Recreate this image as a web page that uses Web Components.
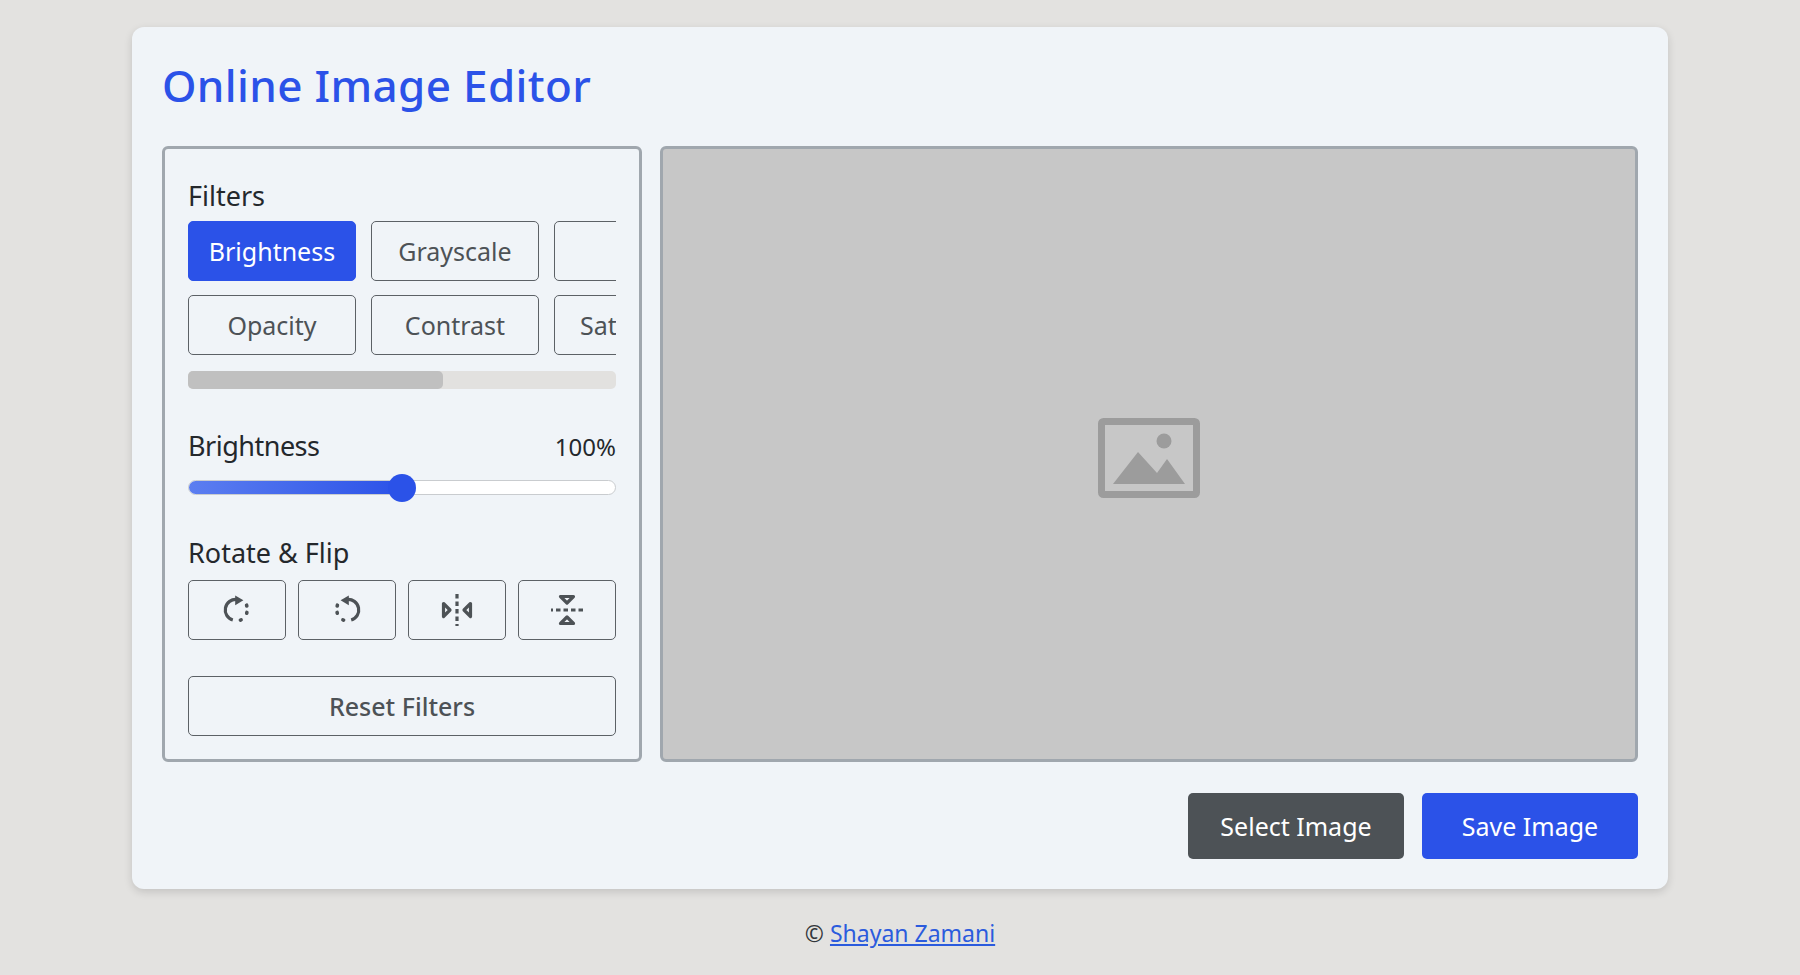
<!DOCTYPE html>
<html lang="en">
<head>
<meta charset="utf-8">
<title>Online Image Editor</title>
<style>
  html, body { margin: 0; height: 100%; }
  body { background: #e3e2e0; font-family: "Noto Sans", "Open Sans", sans-serif; }
</style>
</head>
<body>
<editor-page>
  <editor-card>
    <filter-panel></filter-panel>
    <preview-box></preview-box>
  </editor-card>
</editor-page>

<script>
const FONT = `"Noto Sans", "Open Sans", sans-serif`;

class EditorPage extends HTMLElement {
  constructor() {
    super();
    this.attachShadow({ mode: 'open' });
    this.shadowRoot.innerHTML = `
      <style>
        :host { display: flex; flex-direction: column; align-items: center; padding-top: 27px; font-family: ${FONT}; }
        footer { margin-top: 28px; font-size: 23px; color: #33373b; line-height: 32px; }
        a { color: #2b5bdd; }
      </style>
      <slot></slot>
      <footer>&copy; <a href="#">Shayan Zamani</a></footer>
    `;
  }
}
customElements.define('editor-page', EditorPage);

class EditorCard extends HTMLElement {
  constructor() {
    super();
    this.attachShadow({ mode: 'open' });
    this.shadowRoot.innerHTML = `
      <style>
        :host { display: block; width: 1536px; box-sizing: border-box; padding: 30px; background: #f0f4f8; border-radius: 12px; box-shadow: 0 3px 8px rgba(0,0,0,0.14); }
        h1 { margin: 0 0 33px; color: #2b52e8; font-size: 44px; line-height: 56px; font-weight: 500; letter-spacing: 0.35px; }
        #work { display: flex; gap: 18px; height: 616px; }
        #actions { display: flex; justify-content: flex-end; gap: 18px; margin-top: 31px; }
        button { width: 216px; height: 66px; border: 0; border-radius: 5px; color: #fff; font: 400 25px ${FONT}; background: #4d5256; }
        button.save { background: #2b52e8; }
      </style>
      <h1>Online Image Editor</h1>
      <div id="work"><slot></slot></div>
      <div id="actions">
        <button>Select Image</button>
        <button class="save">Save Image</button>
      </div>
    `;
  }
}
customElements.define('editor-card', EditorCard);

class FilterPanel extends HTMLElement {
  constructor() {
    super();
    this.attachShadow({ mode: 'open' });
    this.shadowRoot.innerHTML = `
      <style>
        :host { display: block; flex: 0 0 480px; min-width: 0; box-sizing: border-box; padding: 29px 23px 28px 23px; border: 3px solid #a0a7ae; border-radius: 6px; color: #24282c; }
        * { box-sizing: border-box; }
        .label { font-size: 27px; line-height: 36px; }
        #scroll { overflow: hidden; margin-top: 7px; }
        #grid { display: grid; grid-template-columns: repeat(4, 168px); gap: 14px 15px; width: 717px; }
        /* native scrollbars don't show up in the headless shot, so draw one */
        #bar { height: 18px; margin-top: 16px; background: #e2e1df; border-radius: 5px; }
        #bar div { width: 59.5%; height: 100%; background: #c0c0c0; border-radius: 5px; }
        button { height: 60px; padding: 0; background: transparent; border: 1px solid #5c6166; border-radius: 5px; color: #4d5256; font: 400 25px ${FONT}; }
        button.on { background: #2b52e8; border-color: #2b52e8; color: #fff; }
        button.nudge { padding-left: 6px; }
        #head { display: flex; justify-content: space-between; align-items: center; margin-top: 39px; }
        #head .label { letter-spacing: -0.5px; }
        #value { font-size: 24px; }
        #track { position: relative; height: 15px; margin-top: 16px; background: #fff; border: 1px solid #c9cccf; border-radius: 8px; }
        #fill { width: 50%; height: 100%; border-radius: 8px 0 0 8px; background: linear-gradient(90deg, #5c7ef0, #2b52e8); }
        #thumb { position: absolute; left: 50%; top: 50%; width: 28px; height: 28px; margin: -14px 0 0 -14px; border-radius: 50%; background: #2b52e8; }
        #rotate-label { margin-top: 40px; }
        #icons { display: flex; gap: 12px; margin-top: 9px; }
        #icons button { flex: 1; display: flex; align-items: center; justify-content: center; }
        svg { width: 34px; height: 34px; fill: none; stroke: #4d5256; stroke-width: 3.2; }
        .dots { stroke-width: 3.6; stroke-linecap: round; }
        .mirror { transform: scaleX(-1); }
        .turn { transform: rotate(90deg); }
        #reset { width: 100%; margin-top: 36px; font-weight: 500; }
      </style>
      <div class="label">Filters</div>
      <div id="scroll"><div id="grid">
        <button class="on">Brightness</button>
        <button>Grayscale</button>
        <button class="nudge">Blur</button>
        <button>Sepia</button>
        <button>Opacity</button>
        <button>Contrast</button>
        <button class="nudge">Saturation</button>
        <button>Invert</button>
      </div></div>
      <div id="bar"><div></div></div>
      <div id="head"><div class="label">Brightness</div><div id="value">100%</div></div>
      <div id="track"><div id="fill"></div><div id="thumb"></div></div>
      <div class="label" id="rotate-label">Rotate &amp; Flip</div>
      <div id="icons">
        <button aria-label="Rotate right"><svg viewBox="0 0 34 34">
          <path d="M17 6.5 A10.5 10.5 0 0 0 12.8 27"/>
          <path d="M15.2 2.4 L23.4 7.2 L15.2 12.2Z" fill="#4d5256" stroke="none"/>
          <path class="dots" d="M26.6 12.2l.2 .8M26.9 19.4l-.2 .8M20.4 27.1l.7 -.3"/>
        </svg></button>
        <button aria-label="Rotate left"><svg class="mirror" viewBox="0 0 34 34">
          <path d="M17 6.5 A10.5 10.5 0 0 0 12.8 27"/>
          <path d="M15.2 2.4 L23.4 7.2 L15.2 12.2Z" fill="#4d5256" stroke="none"/>
          <path class="dots" d="M26.6 12.2l.2 .8M26.9 19.4l-.2 .8M20.4 27.1l.7 -.3"/>
        </svg></button>
        <button aria-label="Flip horizontal"><svg viewBox="0 0 34 34">
          <path d="M17 1 V33" stroke-dasharray="4.5 3"/>
          <path d="M3.5 10.5 L10 17 L3.5 23.5Z" stroke-linejoin="round"/>
          <path d="M30.5 10.5 L24 17 L30.5 23.5Z" stroke-linejoin="round"/>
        </svg></button>
        <button aria-label="Flip vertical"><svg class="turn" viewBox="0 0 34 34">
          <path d="M17 1 V33" stroke-dasharray="4.5 3"/>
          <path d="M3.5 10.5 L10 17 L3.5 23.5Z" stroke-linejoin="round"/>
          <path d="M30.5 10.5 L24 17 L30.5 23.5Z" stroke-linejoin="round"/>
        </svg></button>
      </div>
      <button id="reset">Reset Filters</button>
    `;
  }
}
customElements.define('filter-panel', FilterPanel);

class PreviewBox extends HTMLElement {
  constructor() {
    super();
    this.attachShadow({ mode: 'open' });
    this.shadowRoot.innerHTML = `
      <style>
        :host { flex: 1; display: flex; align-items: center; justify-content: center; background: #c7c7c7; border: 3px solid #a0a7ae; border-radius: 6px; }
        svg { width: 102px; height: 80px; margin-top: 7px; }
      </style>
      <svg viewBox="0 0 102 80" fill="#9c9c9c">
        <rect x="3.5" y="3.5" width="95" height="73" rx="2" fill="none" stroke="#9c9c9c" stroke-width="7"/>
        <circle cx="66" cy="23" r="7.5"/>
        <path d="M15 66 L40 34 L59 55 L69 41 L87 66Z"/>
      </svg>
    `;
  }
}
customElements.define('preview-box', PreviewBox);
</script>
</body>
</html>
